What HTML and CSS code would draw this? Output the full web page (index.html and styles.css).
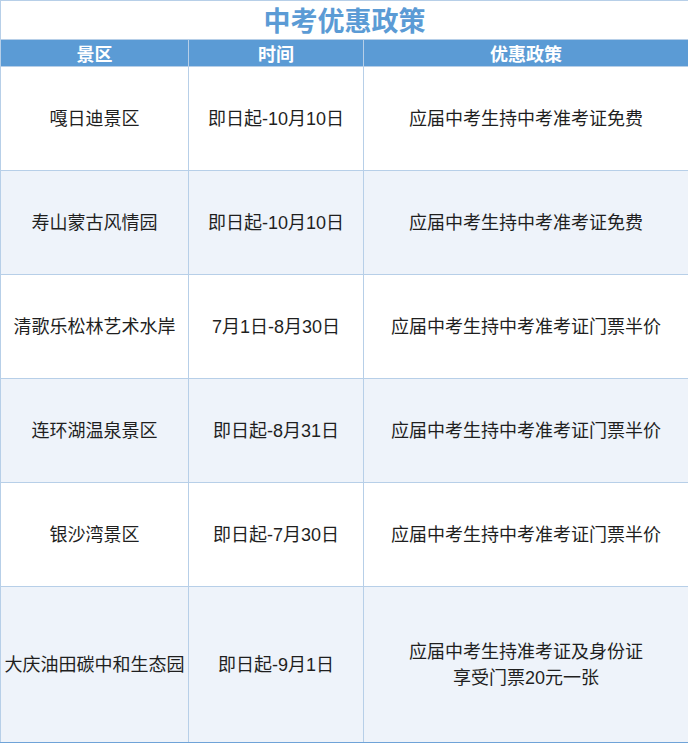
FILE: index.html
```html
<!DOCTYPE html>
<html lang="zh-CN">
<head>
<meta charset="utf-8">
<title>中考优惠政策</title>
<link rel="stylesheet" href="styles.css">
</head>
<body>
<table class="sheet">
  <colgroup>
    <col class="c1">
    <col class="c2">
    <col class="c3">
  </colgroup>
  <tr class="title-row"><td colspan="3" class="title">中考优惠政策</td></tr>
  <tr class="head-row"><th>景区</th><th>时间</th><th>优惠政策</th></tr>
  <tr class="row"><td>嘎日迪景区</td><td>即日起-10月10日</td><td>应届中考生持中考准考证免费</td></tr>
  <tr class="row alt"><td>寿山蒙古风情园</td><td>即日起-10月10日</td><td>应届中考生持中考准考证免费</td></tr>
  <tr class="row"><td>清歌乐松林艺术水岸</td><td>7月1日-8月30日</td><td>应届中考生持中考准考证门票半价</td></tr>
  <tr class="row alt"><td>连环湖温泉景区</td><td>即日起-8月31日</td><td>应届中考生持中考准考证门票半价</td></tr>
  <tr class="row"><td>银沙湾景区</td><td>即日起-7月30日</td><td>应届中考生持中考准考证门票半价</td></tr>
  <tr class="row alt last"><td>大庆油田碳中和生态园</td><td>即日起-9月1日</td><td>应届中考生持准考证及身份证<br>享受门票20元一张</td></tr>
</table>
</body>
</html>
```
FILE: styles.css
```css
html, body {
  margin: 0;
  padding: 0;
  background: #ffffff;
}
.sheet {
  width: 688px;
  border-collapse: collapse;
  table-layout: fixed;
  font-family: "Liberation Sans", "Noto Sans CJK SC", sans-serif;
  color: #1f1f1f;
  font-size: 18px;
}
.c1 { width: 188px; }
.c2 { width: 175px; }
.c3 { width: 325px; }
.sheet td, .sheet th {
  border: 1px solid #b7cfe8;
  text-align: center;
  vertical-align: middle;
  padding: 0;
  line-height: 26px;
}
.title-row td {
  height: 38px;
  font-family: "Noto Sans CJK SC", sans-serif;
  font-size: 27px;
  font-weight: 700;
  color: #5b9bd5;
  line-height: 38px;
}
.head-row th {
  height: 26px;
  background: #5b9bd5;
  color: #ffffff;
  font-family: "Noto Sans CJK SC", sans-serif;
  font-size: 18px;
  font-weight: 700;
  line-height: 24px;
}
.row td {
  height: 103px;
  background: #ffffff;
}
.row.alt td {
  background: #eef3fa;
}
.row.last td {
  height: 155px;
  border-bottom-color: #6fa3d8;
}
.sheet tr td:last-child, .sheet tr th:last-child {
  border-right-color: #8db6e0;
}
```
